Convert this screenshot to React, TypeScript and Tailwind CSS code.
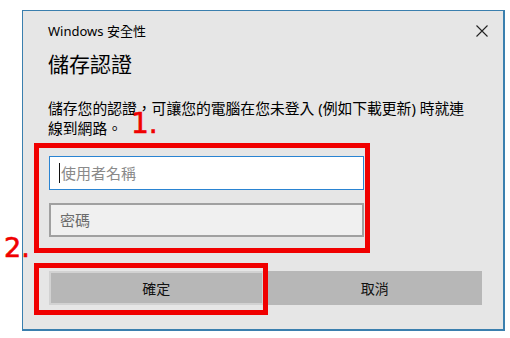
import React from "react";

const font = { fontFamily: '"Noto Sans", "Noto Sans CJK TC", sans-serif' };

export default function App() {
  return (
    <div className="relative w-[510px] h-[338px] bg-white overflow-hidden" style={font}>
      <div className="ml-[22px] mt-[10px] w-[483px] h-[321px] bg-[#e6e6e6] border border-[#3a7fae] border-b-2 border-r-2 flex flex-col pl-[25px]">
        <div className="mt-[12px] h-[16px] flex items-center justify-between pr-[14px]">
          <span className="text-[13px] leading-[16px] text-black">Windows 安全性</span>
          <svg width="12" height="12" viewBox="0 0 12 12" className="mr-[1px]">
            <path d="M0.5 0.5 L11.5 11.5 M11.5 0.5 L0.5 11.5" stroke="#222" strokeWidth="1.1" fill="none" />
          </svg>
        </div>
        <div className="mt-[11px] text-[21px] leading-[28px] text-black">儲存認證</div>
        <div className="mt-[20px] text-[14.8px] leading-[20px] text-black whitespace-nowrap">
          儲存您的認證，可讓您的電腦在您未登入 (例如下載更新) 時就連
          <br />
          線到網路。
        </div>
        <div className="ml-[1px] mt-[18px] w-[315px] h-[34px] bg-white border border-[#2a84d2] flex items-center pl-[9px]">
          <span className="w-px h-[20px] bg-[#111] mr-[1px]" />
          <span className="text-[15px] text-[#8a8a8a]">使用者名稱</span>
        </div>
        <div className="ml-[1px] mt-[13px] w-[315px] h-[34px] bg-[#f0f0f0] border-2 border-[#a0a0a0] flex items-center pl-[9px]">
          <span className="text-[15px] text-[#6b6b6b]">密碼</span>
        </div>
        <div className="ml-[1px] mt-[34px] w-[433px] h-[34px] grid grid-cols-2 gap-[4px]">
          <div className="bg-[#b7b7b7] border-2 border-[#d2d2d2] flex items-center justify-center text-[14px] text-[#111]">確定</div>
          <div className="bg-[#b7b7b7] flex items-center justify-center text-[14px] text-[#111]">取消</div>
        </div>
      </div>

      {/* annotations */}
      <div className="absolute left-[34px] top-[143px] w-[336px] h-[110px] border-[5px] border-[#f00000]" />
      <div className="absolute left-[34px] top-[263px] w-[234px] h-[52px] border-[5px] border-[#f00000]" />
      <div
        className="absolute left-[131px] top-[110px] text-[28px] leading-none text-[#f00000]"
        style={{ fontFamily: '"DejaVu Sans", sans-serif', WebkitTextStroke: "0.6px #f00000" }}
      >
        1.
      </div>
      <div
        className="absolute left-[4px] top-[234px] text-[27px] leading-none text-[#f00000]"
        style={{ fontFamily: '"DejaVu Sans", sans-serif', WebkitTextStroke: "0.6px #f00000" }}
      >
        2.
      </div>
    </div>
  );
}
